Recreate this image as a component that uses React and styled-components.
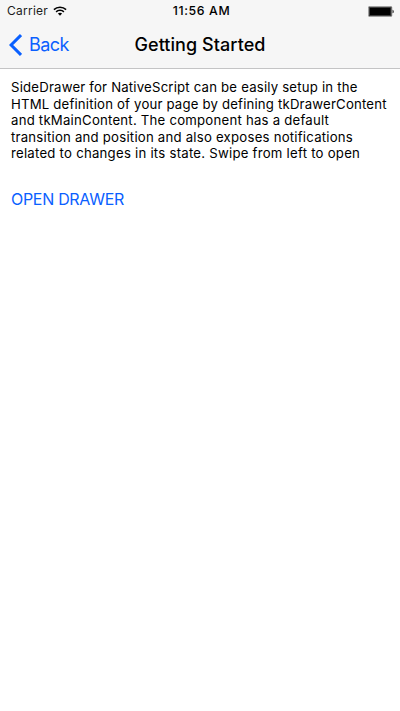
import React from "react";
import styled, { createGlobalStyle } from "styled-components";

const GlobalStyle = createGlobalStyle`
  * { box-sizing: border-box; }
  body {
    margin: 0;
    background: #fff;
    font-family: Inter, "Liberation Sans", sans-serif;
    color: #000;
  }
`;

const Screen = styled.div`
  display: flex;
  flex-direction: column;
  height: 711px;
  overflow: hidden;
  background: #fff;
`;

const Header = styled.header`
  height: 69px;
  background: #f6f6f6;
  border-bottom: 1px solid #c4c4c5;
`;

const StatusBar = styled.div`
  display: grid;
  grid-template-columns: 1fr auto 1fr;
  align-items: center;
  height: 22px;
  padding: 0 6px 0 7px;
  font-size: 12px;
  line-height: 22px;
`;

const Carrier = styled.div`
  display: flex;
  align-items: center;
  gap: 5px;
  letter-spacing: 0.25px;
  color: #1c1c1c;
`;

const Clock = styled.div`
  padding-left: 2px;
  font-size: 12.3px;
  font-weight: 550;
  letter-spacing: 0.65px;
`;

const Battery = styled.svg`
  justify-self: end;
`;

const NavBar = styled.div`
  display: grid;
  grid-template-columns: 1fr auto 1fr;
  align-items: center;
  height: 46px;
  padding: 0 9px;
`;

const BackButton = styled.button`
  display: flex;
  align-items: center;
  gap: 7px;
  padding: 0;
  border: 0;
  background: none;
  color: #0a60ff;
  font: 400 18px/24px Inter, sans-serif;
  letter-spacing: -0.55px;
`;

const Title = styled.h1`
  margin: 0;
  font-size: 18px;
  font-weight: 550;
  line-height: 24px;
  letter-spacing: 0.06px;
`;

const Content = styled.main`
  display: flex;
  flex-direction: column;
  align-items: flex-start;
  padding: 10px 11px;
`;

const Description = styled.p`
  margin: 0;
  font-size: 13.2px;
  line-height: 16.6px;
`;

const Line = styled.span`
  display: block;
  white-space: nowrap;
  letter-spacing: ${({ $spacing }) => $spacing}px;
`;

const DrawerButton = styled.button`
  margin-top: 25px;
  padding: 0;
  border: 0;
  background: none;
  color: #0a60ff;
  font: 400 16px/24px Inter, sans-serif;
  letter-spacing: -0.3px;
`;

const lines = [
  { text: "SideDrawer for NativeScript can be easily setup in the", spacing: 0.19 },
  { text: "HTML definition of your page by defining tkDrawerContent", spacing: 0.18 },
  { text: "and tkMainContent. The component has a default", spacing: 0.22 },
  { text: "transition and position and also exposes notifications", spacing: 0.22 },
  { text: "related to changes in its state. Swipe from left to open", spacing: 0.24 },
];

const WifiIcon = () => (
  <svg width="14" height="10" viewBox="0 0 14 10" fill="none" stroke="#000" strokeWidth="1.5">
    <path d="M0.9 3.6C4.2 0.3 9.8 0.3 13.1 3.6" />
    <path d="M3.1 5.9C5.2 3.8 8.8 3.8 10.9 5.9" />
    <path d="M7 9.7L4.9 7.5C6 6.5 8 6.5 9.1 7.5Z" fill="#000" stroke="none" />
  </svg>
);

const BatteryIcon = () => (
  <Battery width="26" height="11" viewBox="0 0 26 11">
    <rect x="0.5" y="0.5" width="23.3" height="10" rx="1" fill="#000" stroke="#a0a0a0" />
    <rect x="1.4" y="1.4" width="21.5" height="8.2" fill="none" stroke="#4a4a4a" strokeWidth="0.8" />
    <path d="M24.6 3.7C26 4 26 7 24.6 7.3Z" fill="#000" />
  </Battery>
);

const ChevronIcon = () => (
  <svg width="13" height="22" viewBox="0 0 13 22" fill="none" stroke="#0a60ff" strokeWidth="3">
    <path d="M12 1.1L2.1 11L12 20.9" />
  </svg>
);

export default function App() {
  return (
    <>
      <GlobalStyle />
      <Screen>
        <Header>
          <StatusBar>
            <Carrier>
              <span>Carrier</span>
              <WifiIcon />
            </Carrier>
            <Clock>11:56 AM</Clock>
            <BatteryIcon />
          </StatusBar>
          <NavBar>
            <BackButton>
              <ChevronIcon />
              <span>Back</span>
            </BackButton>
            <Title>Getting Started</Title>
          </NavBar>
        </Header>
        <Content>
          <Description>
            {lines.map(({ text, spacing }) => (
              <Line key={text} $spacing={spacing}>{text}</Line>
            ))}
          </Description>
          <DrawerButton>OPEN DRAWER</DrawerButton>
        </Content>
      </Screen>
    </>
  );
}
